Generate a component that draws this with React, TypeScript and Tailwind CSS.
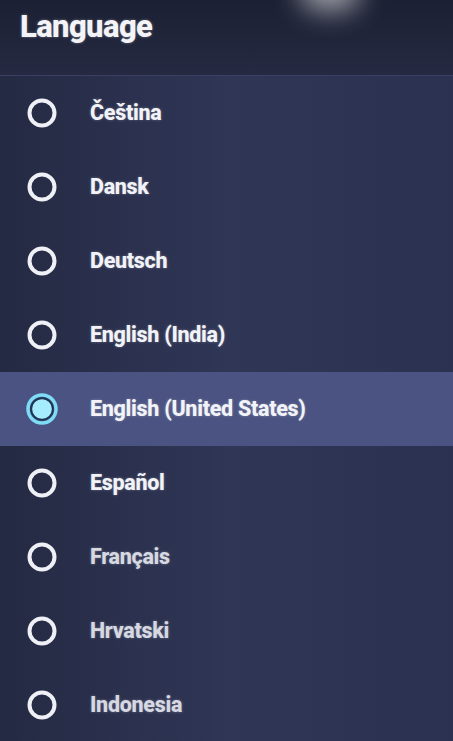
import React, { useState } from 'react';

const languages = [
  'Čeština',
  'Dansk',
  'Deutsch',
  'English (India)',
  'English (United States)',
  'Español',
  'Français',
  'Hrvatski',
  'Indonesia',
];

const Radio: React.FC<{ checked: boolean }> = ({ checked }) =>
  checked ? (
    <svg width="32" height="32" viewBox="0 0 32 32">
      <circle cx="16" cy="16" r="14" fill="none" stroke="#7fdcf6" strokeWidth="3.5" />
      <circle cx="16" cy="16" r="10.8" fill="none" stroke="#1d3650" strokeWidth="2" />
      <circle cx="16" cy="16" r="9.8" fill="#a6ecff" />
    </svg>
  ) : (
    <svg width="32" height="32" viewBox="0 0 32 32">
      <circle cx="16" cy="16" r="12.5" fill="none" stroke="#eef0f6" strokeWidth="4" />
    </svg>
  );

export default function App() {
  const [selected, setSelected] = useState('English (United States)');

  return (
    <div className="relative w-[453px] h-[741px] overflow-hidden bg-gradient-to-r from-[#252a43] via-[#2f3656] to-[#2b3151] font-['Roboto',sans-serif]">
      {/* glare from the lamp in the photo */}
      <div className="absolute left-[300px] -top-[30px] w-[60px] h-[40px] rounded-full bg-white/60 blur-[14px] pointer-events-none" />

      {/* Header */}
      <div className="h-[76px] px-5 pt-[6px] bg-gradient-to-b from-[#1c2033] to-[#252a42] border-b border-[#394060]">
        <h1 className="text-[31px] leading-[42px] font-extrabold text-[#f4f4f8] tracking-[-0.6px] [text-shadow:0_0_3px_rgba(255,255,255,0.35)]">
          Language
        </h1>
      </div>

      {/* List */}
      <div className="flex flex-col">
        {languages.map((lang, i) => {
          const isSel = lang === selected;
          return (
            <button
              key={lang}
              onClick={() => setSelected(lang)}
              className={`h-[74px] flex items-center gap-[32px] pl-[26px] text-left ${
                isSel ? 'bg-[#4a5381]' : ''
              }`}
            >
              <Radio checked={isSel} />
              <span
                className={`text-[21.5px] font-extrabold tracking-[-0.3px] [text-shadow:0_0_3px_rgba(255,255,255,0.3)] ${
                  i >= 6 ? 'text-[#d6d8e2]' : 'text-[#f2f3f8]'
                }`}
              >
                {lang}
              </span>
            </button>
          );
        })}
      </div>
    </div>
  );
}
